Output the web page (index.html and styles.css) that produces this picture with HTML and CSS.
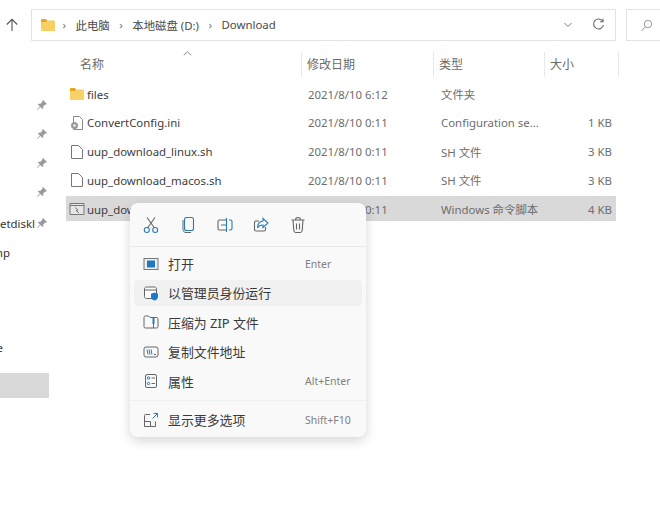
FILE: index.html
```html
<!DOCTYPE html>
<html lang="zh-CN">
<head>
    <meta charset="UTF-8">
    <title>Download</title>
    <link rel="stylesheet" href="styles.css">
</head>
<body>
<div class="window">
    <div class="toolbar">
        <svg class="up-icon" width="14" height="14" viewBox="0 0 14 14"><path d="M7 13V1.500M1.800 6.500 7 1.300l5.200 5.200" fill="none" stroke="#555" stroke-width="1.100"/></svg>
        <div class="address">
            <svg class="crumb-folder" width="16" height="14" viewBox="0 0 16 14"><path d="M1 2.500C1 1.700 1.500 1 2.300 1h3.400l1.600 1.600h6.400c.8 0 1.300.6 1.300 1.300v8c0 .7-.5 1.100-1.200 1.100H2.200C1.500 13 1 12.500 1 11.800z" fill="#f7cf62"/><path d="M1 2.500C1 1.700 1.500 1 2.300 1h3.400l1.600 1.600-1.500 1.300H1z" fill="#e5a823"/></svg>
            <span class="crumb-sep">›</span>
            <span>此电脑</span>
            <span class="crumb-sep">›</span>
            <span>本地磁盘 (D:)</span>
            <span class="crumb-sep">›</span>
            <span>Download</span>
            <svg class="chevron" width="10" height="6" viewBox="0 0 10 6"><path d="M1.500 1 5 4.500 8.500 1" fill="none" stroke="#777" stroke-width="1"/></svg>
            <svg class="refresh" width="13" height="13" viewBox="0 0 13 13"><path d="M10.800 3.200A5 5 0 1 0 11.500 7" fill="none" stroke="#666" stroke-width="1.100"/><path d="M11 .8v3H8" fill="none" stroke="#666" stroke-width="1.100"/></svg>
        </div>
        <div class="search">
            <svg width="13" height="13" viewBox="0 0 13 13"><circle cx="8" cy="5" r="3.700" fill="none" stroke="#999" stroke-width="1"/><path d="M5.300 7.700 1.500 12" stroke="#999" stroke-width="1"/></svg>
        </div>
    </div>

    <div class="content">
        <div class="sidebar">
            <div class="nav-row"><svg class="pin" viewBox="0 0 12 12"><path d="M7 1l4 4-1 .8-.8-.3-2 2 .1 1.800-.9.7-2-2L1.500 11 1 10.500l2.900-2.900-2-2 .7-.9 1.800.1 2-2L6.200 2z"/></svg></div>
            <div class="nav-row"><svg class="pin" viewBox="0 0 12 12"><path d="M7 1l4 4-1 .8-.8-.3-2 2 .1 1.800-.9.7-2-2L1.500 11 1 10.500l2.900-2.900-2-2 .7-.9 1.800.1 2-2L6.200 2z"/></svg></div>
            <div class="nav-row"><svg class="pin" viewBox="0 0 12 12"><path d="M7 1l4 4-1 .8-.8-.3-2 2 .1 1.800-.9.7-2-2L1.500 11 1 10.500l2.900-2.900-2-2 .7-.9 1.800.1 2-2L6.200 2z"/></svg></div>
            <div class="nav-row"><svg class="pin" viewBox="0 0 12 12"><path d="M7 1l4 4-1 .8-.8-.3-2 2 .1 1.800-.9.7-2-2L1.500 11 1 10.500l2.900-2.900-2-2 .7-.9 1.800.1 2-2L6.200 2z"/></svg></div>
            <div class="nav-row nav-row-netdisk"><span>BaiduNetdiskl</span><svg class="pin" viewBox="0 0 12 12"><path d="M7 1l4 4-1 .8-.8-.3-2 2 .1 1.800-.9.7-2-2L1.500 11 1 10.500l2.900-2.900-2-2 .7-.9 1.800.1 2-2L6.200 2z"/></svg></div>
            <div class="nav-row nav-row-np"><span>Temp</span></div>
            <div class="nav-row nav-row-e"><span>e</span></div>
            <div class="nav-selected"></div>
        </div>

        <div class="main">
            <div class="list-header">
                <div class="col-head col-name">名称<svg class="sort-caret" width="9" height="5" viewBox="0 0 9 5"><path d="M.8 4.300 4.500.8l3.700 3.500" fill="none" stroke="#888" stroke-width="1"/></svg></div>
                <div class="col-head">修改日期</div>
                <div class="col-head">类型</div>
                <div class="col-head">大小</div>
                <div class="col-end"></div>
            </div>
            <div class="file-list">
                <div class="file-row">
                    <div class="file-name"><svg width="16" height="14" viewBox="0 0 16 14"><path d="M1 2.200C1 1.500 1.500 1 2.200 1h3.500l1.600 1.600h6.500c.7 0 1.200.5 1.200 1.200v8.100c0 .6-.5 1.100-1.200 1.100H2.100C1.500 13 1 12.500 1 11.900z" fill="#f8d168"/><path d="M1 2.200C1 1.500 1.500 1 2.200 1h3.500l1.600 1.600-1.500 1.300H1z" fill="#e5a823"/></svg>files</div>
                    <div>2021/8/10 6:12</div>
                    <div>文件夹</div>
                    <div class="file-size"></div>
                </div>
                <div class="file-row">
                    <div class="file-name"><svg width="16" height="16" viewBox="0 0 16 16"><path d="M4.500 1.500h6l3 3v10h-9z" fill="#fff" stroke="#888"/><circle cx="5.500" cy="10.500" r="3.500" fill="#9a9a9a"/><circle cx="5.500" cy="10.500" r="1.300" fill="#eee"/></svg>ConvertConfig.ini</div>
                    <div>2021/8/10 0:11</div>
                    <div>Configuration se...</div>
                    <div class="file-size">1 KB</div>
                </div>
                <div class="file-row">
                    <div class="file-name"><svg width="16" height="16" viewBox="0 0 16 16"><path d="M2.500 1.500h7l4 4v9h-11z" fill="#fff" stroke="#777"/></svg>uup_download_linux.sh</div>
                    <div>2021/8/10 0:11</div>
                    <div>SH 文件</div>
                    <div class="file-size">3 KB</div>
                </div>
                <div class="file-row">
                    <div class="file-name"><svg width="16" height="16" viewBox="0 0 16 16"><path d="M2.500 1.500h7l4 4v9h-11z" fill="#fff" stroke="#777"/></svg>uup_download_macos.sh</div>
                    <div>2021/8/10 0:11</div>
                    <div>SH 文件</div>
                    <div class="file-size">3 KB</div>
                </div>
                <div class="file-row selected">
                    <div class="file-name"><svg width="16" height="14" viewBox="0 0 16 14"><path d="M1 1.500h14v11H1z" fill="#e6e6e6" stroke="#777"/><path d="M1 3.500h14" stroke="#777"/><path d="M6 5.500l3 2.500-1.800.6L10 11" fill="none" stroke="#777"/></svg>uup_download.cmd</div>
                    <div>2021/8/10 0:11</div>
                    <div>Windows 命令脚本</div>
                    <div class="file-size">4 KB</div>
                </div>
            </div>
        </div>
    </div>

    <div class="context-menu">
        <div class="menu-tools">
            <svg width="16" height="18" viewBox="0 0 16 18"><path d="M4 1.500 11.500 12M12 1.500 4.500 12" fill="none" stroke="#666" stroke-width="1.100"/><circle cx="3.800" cy="14" r="2.500" fill="none" stroke="#2a7ab8" stroke-width="1.100"/><circle cx="12.200" cy="14" r="2.500" fill="none" stroke="#2a7ab8" stroke-width="1.100"/></svg>
            <svg width="16" height="18" viewBox="0 0 16 18"><rect x="4.500" y="1.500" width="9" height="13" rx="2" fill="none" stroke="#2a7ab8" stroke-width="1.100"/><path d="M3 4v9.500C3 15.500 4.500 16.500 6 16.500h5" fill="none" stroke="#666" stroke-width="1"/></svg>
            <svg width="16" height="18" viewBox="0 0 16 18"><path d="M9.500 4H2.500C1.500 4 1 4.600 1 5.500v7c0 .9.500 1.500 1.500 1.500h7" fill="none" stroke="#666" stroke-width="1.100"/><path d="M4 9h5.500M9.500 2v14M12 4h1.500c.9 0 1.500.6 1.500 1.500v7c0 .9-.6 1.500-1.500 1.500H12" fill="none" stroke="#2a7ab8" stroke-width="1.100"/></svg>
            <svg width="16" height="18" viewBox="0 0 16 18"><path d="M6 5H3C2 5 1.500 5.600 1.500 6.500v7c0 1 .5 1.500 1.500 1.500h8c1 0 1.500-.5 1.500-1.500V11" fill="none" stroke="#666" stroke-width="1.100"/><path d="M10 2.500 15 7l-5 4.500V9C7.500 9 5.500 10 4.500 12c0-4 2-6.500 5.500-7z" fill="none" stroke="#2a7ab8" stroke-width="1.100"/></svg>
            <svg width="16" height="18" viewBox="0 0 16 18"><path d="M1.500 4h13M5.500 4c0-1.500 1-2.500 2.500-2.500S10.500 2.500 10.500 4M3 4l.8 10.500c.1 1 .7 2 2 2h4.400c1.300 0 1.900-1 2-2L13 4M6.500 7.500v6M9.500 7.500v6" fill="none" stroke="#666" stroke-width="1.100"/></svg>
        </div>
        <div class="menu-items">
            <div class="menu-item">
                <svg width="16" height="14" viewBox="0 0 16 14"><rect x="1" y="1.500" width="14" height="11" fill="#eee" stroke="#777"/><rect x="4" y="3.500" width="8" height="7" fill="#1f78c4"/></svg>
                <span>打开</span><span class="shortcut">Enter</span>
            </div>
            <div class="menu-item hovered">
                <svg width="16" height="16" viewBox="0 0 16 16"><path d="M1.500 4c0-1.200.8-2 2-2h8c1.200 0 2 .8 2 2v9.500h-10c-1.200 0-2-.8-2-2z" fill="#fff" stroke="#666"/><path d="M1.500 5h12" stroke="#666"/><path d="M11.500 7.500l3.500 1.200v3c0 2-1.500 3.300-3.500 3.800-2-.5-3.500-1.800-3.500-3.800v-3z" fill="#1a78d0"/></svg>
                <span>以管理员身份运行</span>
            </div>
            <div class="menu-item">
                <svg width="16" height="16" viewBox="0 0 16 16"><path d="M1 3.500C1 2.700 1.500 2 2.300 2h3.200l1.500 1.500h6.700c.8 0 1.300.6 1.300 1.300v8c0 .7-.5 1.200-1.300 1.200H2.300C1.500 14 1 13.500 1 12.800z" fill="none" stroke="#666"/><path d="M10.500 3.500V14M9 5h3M9 7h3M9 9h3" fill="none" stroke="#2a7ab8"/></svg>
                <span>压缩为 ZIP 文件</span>
            </div>
            <div class="menu-item">
                <svg width="16" height="14" viewBox="0 0 16 14"><rect x="1" y="2" width="14" height="10" rx="2" fill="none" stroke="#666"/><path d="M4 4.500l1 5M6 4.500l1 5M8 4.500l1 5" fill="none" stroke="#2a7ab8"/><path d="M11 9.500h2" stroke="#666"/></svg>
                <span>复制文件地址</span>
            </div>
            <div class="menu-item">
                <svg width="16" height="16" viewBox="0 0 16 16"><rect x="2.500" y="1.500" width="11" height="13" rx="1.500" fill="none" stroke="#666"/><circle cx="5.500" cy="5" r="1.200" fill="none" stroke="#2a7ab8"/><circle cx="5.500" cy="10.500" r="1.200" fill="none" stroke="#2a7ab8"/><path d="M8.500 5H12M8.500 10.500H12" stroke="#666"/></svg>
                <span>属性</span><span class="shortcut">Alt+Enter</span>
            </div>
            <div class="menu-divider"></div>
            <div class="menu-item">
                <svg width="16" height="16" viewBox="0 0 16 16"><path d="M7 2.500H2.500a1 1 0 0 0-1 1v11h11V9.500M1.500 9.500h6v5" fill="none" stroke="#666"/><path d="M9.500 6.500 14.500 1.500M10.500 1.500h4v4" fill="none" stroke="#2a7ab8"/></svg>
                <span>显示更多选项</span><span class="shortcut">Shift+F10</span>
            </div>
        </div>
    </div>
</div>
</body>
</html>
```

FILE: styles.css
```css
* {
    box-sizing: border-box;
}

body {
    margin: 0;
    background-color: #fff;
    font-family: "Noto Sans", "Noto Sans CJK SC", sans-serif;
    font-size: 11.4px;
    color: #444;
}

.window {
    position: relative;
    width: 660px;
    height: 511px;
    overflow: hidden;
}

.toolbar {
    display: flex;
    align-items: center;
    padding: 9px 0 0 5px;
}

.up-icon {
    flex-shrink: 0;
    margin-right: 12px;
}

.address {
    display: flex;
    flex-shrink: 0;
    align-items: center;
    gap: 9.5px;
    width: 585px;
    height: 32px;
    padding: 0 10px 1px 8px;
    border: 1px solid #e2e2e2;
    color: #4a4a4a;
}

.crumb-folder {
    margin-right: -3px;
}

.crumb-sep {
    color: #777;
}

.chevron {
    margin-left: auto;
    margin-right: 10px;
}

.search {
    display: flex;
    flex-shrink: 0;
    align-items: center;
    width: 50px;
    height: 32px;
    margin-left: 10px;
    padding-left: 13px;
    border: 1px solid #e2e2e2;
}

.content {
    display: flex;
}

.sidebar {
    width: 66px;
    flex-shrink: 0;
    padding-top: 49px;
}

.nav-row {
    display: flex;
    justify-content: flex-end;
    align-items: center;
    width: 48px;
    height: 29px;
    overflow: hidden;
    white-space: nowrap;
    color: #333;
}

.nav-row span {
    flex-shrink: 0;
}

.pin {
    flex-shrink: 0;
    width: 12px;
    height: 12px;
    margin-left: 1px;
    fill: #9a9a9a;
}

.nav-row-netdisk {
    margin-top: 2px;
}

.nav-row-netdisk span,
.nav-row-np span {
    padding-top: 2px;
}

.nav-row-np {
    padding-right: 38px;
}

.nav-row-e {
    margin-top: 67px;
    padding-right: 45px;
}

.nav-selected {
    width: 49px;
    height: 25px;
    margin-top: 11px;
    background-color: #d9d9d9;
}

.main {
    flex: 1;
}

.list-header {
    display: grid;
    grid-template-columns: 236px 132px 111px 74px 1px;
    margin-top: 11px;
    height: 25px;
    font-size: 12px;
    color: #6b6b6b;
}

.col-head {
    position: relative;
    display: flex;
    align-items: center;
    padding: 0 0 2px 5px;
    border-right: 1px solid #e8e8e8;
}

.col-name {
    padding-left: 14px;
}

.sort-caret {
    position: absolute;
    left: 117px;
    top: -1px;
}

.file-list {
    display: flex;
    flex-direction: column;
    gap: 3.75px;
    margin-top: 4px;
    width: 550px;
}

.file-row {
    display: grid;
    grid-template-columns: 242px 133px 112px 59px;
    align-items: center;
    height: 25px;
    padding-top: 1px;
    color: #6d6d6d;
}

.file-row.selected {
    background-color: #d9d9d9;
}

.file-name {
    display: flex;
    align-items: center;
    gap: 2px;
    padding-left: 3px;
    color: #3c3c3c;
    white-space: nowrap;
}

.file-size {
    text-align: right;
}

.context-menu {
    position: absolute;
    left: 130px;
    top: 203px;
    width: 236px;
    height: 234px;
    background-color: #f9f9f9;
    border-radius: 8px;
    box-shadow: 0 4px 12px rgba(0, 0, 0, 0.16);
}

.menu-tools {
    display: flex;
    gap: 20.8px;
    height: 44px;
    padding: 13px 0 0 13px;
    border-bottom: 1px solid #e8e8e8;
}

.menu-items {
    display: flex;
    flex-direction: column;
    gap: 3.4px;
    padding: 3.6px 4px 0;
}

.menu-item {
    display: grid;
    grid-template-columns: 16px 128px auto;
    column-gap: 9px;
    align-items: center;
    height: 26px;
    padding-left: 9px;
    font-size: 12.9px;
    color: #3a3a3a;
    border-radius: 4px;
}

.menu-item.hovered {
    background-color: #f1f1f1;
}

.shortcut {
    font-size: 10.5px;
    color: #808080;
    white-space: nowrap;
}

.menu-divider {
    height: 1px;
    margin: 2.3px -4px;
    background-color: #f0f0f0;
}
```
